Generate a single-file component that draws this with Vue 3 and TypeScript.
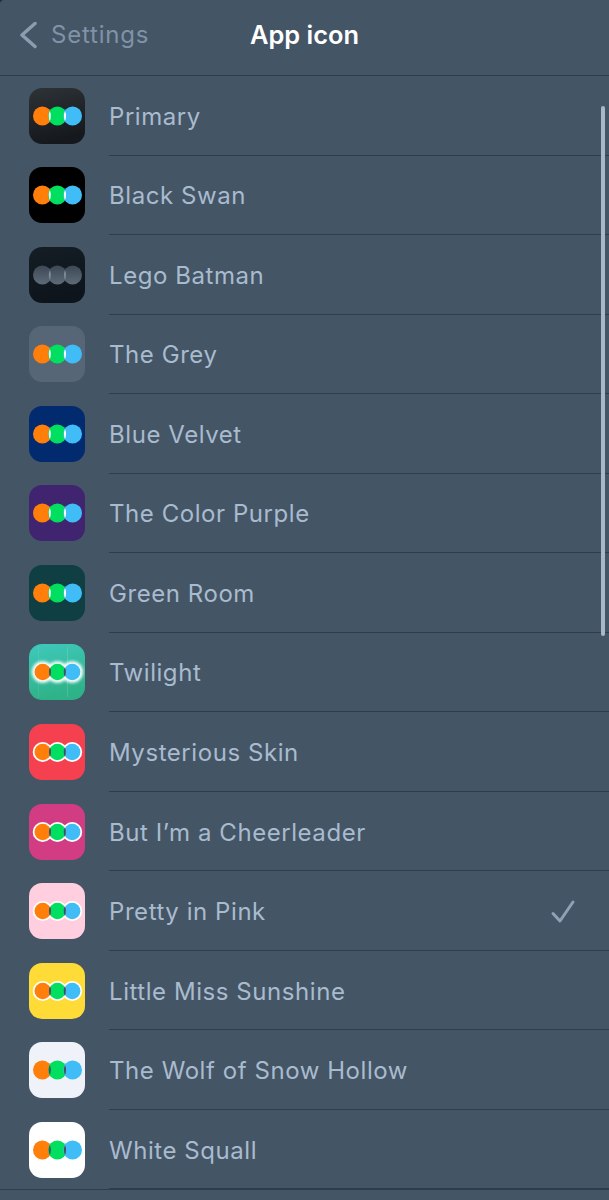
<template>
  <div class="screen">
    <header class="topbar">
      <div class="back">
        <svg class="chevron" width="20" height="30" viewBox="0 0 20 30" fill="none">
          <path d="M18 3.5 5 15l13 11.5" stroke="#8b9eb1" stroke-width="3.4" stroke-linecap="round" stroke-linejoin="round" />
        </svg>
        <span class="back-text">Settings</span>
      </div>
      <h1 class="title">App icon</h1>
    </header>

    <ul class="list">
      <li v-for="(item, i) in icons" :key="item.name" class="row">
        <svg class="icon" width="56" height="56" viewBox="0 0 56 56">
          <defs>
            <linearGradient v-if="item.gradient" :id="'bg' + i" x1="0" y1="0" x2="0.25" y2="1">
              <stop offset="0" :stop-color="item.gradient[0]" />
              <stop offset="1" :stop-color="item.gradient[1]" />
            </linearGradient>
            <linearGradient v-if="item.muted" id="dot" x1="0" y1="0" x2="0" y2="1">
              <stop offset="0" stop-color="#3d4855" />
              <stop offset="1" stop-color="#5d6a77" />
            </linearGradient>
            <filter v-if="item.glow" id="soft" x="-20%" y="-60%" width="140%" height="220%">
              <feGaussianBlur stdDeviation="1.7" />
            </filter>
          </defs>
          <rect width="56" height="56" rx="13" :fill="item.gradient ? `url(#bg${i})` : item.bg" />
          <template v-if="item.glow">
            <rect x="38" y="3" width="1" height="50" fill="#fff" opacity=".14" />
            <rect x="9" y="2" width="1" height="52" fill="#fff" opacity=".08" />
            <g filter="url(#soft)">
              <circle v-for="x in ringCenters" :key="x" :cx="x" cy="28" r="10.8" fill="#fff" />
            </g>
          </template>
          <template v-if="item.ring">
            <circle v-for="x in ringCenters" :key="x" :cx="x" cy="28" r="10" fill="#fff" />
          </template>
          <template v-if="item.muted">
            <circle v-for="x in centers" :key="x" :cx="x" cy="28" r="9.4" fill="url(#dot)" />
            <path v-for="x in lensAt" :key="x" :d="lens(x)" fill="#7d8995" />
          </template>
          <template v-else-if="item.ring || item.glow">
            <circle :cx="ringCenters[0]" cy="28" r="8.2" fill="#ff7f0a" />
            <circle :cx="ringCenters[1]" cy="28" r="8.2" fill="#00df5f" />
            <circle :cx="ringCenters[2]" cy="28" r="8.2" fill="#40bcf6" />
            <path v-for="x in ringLensAt" :key="x" :d="lens(x)" :fill="item.lens" />
          </template>
          <template v-else>
            <circle :cx="centers[0]" cy="28" r="9.4" fill="#ff7f0a" />
            <circle :cx="centers[1]" cy="28" r="9.4" fill="#00df5f" />
            <circle :cx="centers[2]" cy="28" r="9.4" fill="#40bcf6" />
            <path v-for="x in lensAt" :key="x" :d="lens(x)" :fill="item.lens" />
          </template>
        </svg>
        <div class="label">
          <span>{{ item.name }}</span>
          <svg v-if="item.name === selected" class="check" width="26" height="26" viewBox="0 0 26 26" fill="none">
            <path d="M3 14.5 10 22 23 3" stroke="#8fa2b5" stroke-width="3" stroke-linecap="round" stroke-linejoin="round" />
          </svg>
        </div>
      </li>
    </ul>

    <div class="scrollbar" />
  </div>
</template>

<script setup lang="ts">
interface AppIcon {
  name: string;
  bg?: string;
  gradient?: [string, string];
  lens: string;
  ring?: boolean;
  glow?: boolean;
  muted?: boolean;
}

const selected = 'Pretty in Pink';
const centers = [13.4, 28.4, 43.6];
const lensAt = [20.8, 36];
const ringCenters = [13.7, 28.4, 43.2];
const ringLensAt = [21, 35.8];

// sliver where two neighbouring dots overlap
function lens(x: number) {
  return `M${x} 23A13 13 0 0 1 ${x} 33A13 13 0 0 1 ${x} 23Z`;
}

const icons: AppIcon[] = [
  { name: 'Primary', gradient: ['#2e3338', '#15181d'], lens: '#fff' },
  { name: 'Black Swan', bg: '#000', lens: '#fff' },
  { name: 'Lego Batman', gradient: ['#151d25', '#0d141b'], lens: '#fff', muted: true },
  { name: 'The Grey', bg: '#566676', lens: '#fff' },
  { name: 'Blue Velvet', bg: '#012a6f', lens: '#fff' },
  { name: 'The Color Purple', bg: '#41246f', lens: '#fff' },
  { name: 'Green Room', bg: '#0f3f42', lens: '#fff' },
  { name: 'Twilight', gradient: ['#3fc9bd', '#2eb287'], lens: '#44525e', glow: true },
  { name: 'Mysterious Skin', bg: '#f5414f', lens: '#44525e', ring: true },
  { name: 'But I’m a Cheerleader', bg: '#d23c82', lens: '#44525e', ring: true },
  { name: 'Pretty in Pink', bg: '#ffcfe0', lens: '#44525e', ring: true },
  { name: 'Little Miss Sunshine', bg: '#ffdb38', lens: '#44525e', ring: true },
  { name: 'The Wolf of Snow Hollow', bg: '#eff3f9', lens: '#44525e' },
  { name: 'White Squall', bg: '#fff', lens: '#44525e' }
];
</script>

<style>
html, body { background: #1f2a33; }
</style>

<style scoped>
.screen {
  position: relative;
  width: 609px;
  height: 1200px;
  overflow: hidden;
  background: #445566;
  border-top-left-radius: 4px;
  font-family: Inter, "Liberation Sans", sans-serif;
}
.topbar {
  display: flex;
  align-items: center;
  justify-content: center;
  position: relative;
  height: 76px;
  box-sizing: border-box;
  padding-bottom: 6px;
  border-bottom: 1px solid #2e3e4e;
}
.back {
  position: absolute;
  left: 17px;
  top: 20px;
  display: flex;
  align-items: center;
  gap: 14px;
  font-size: 24px;
  letter-spacing: 0.8px;
  color: #8093a6;
}
.back-text { margin-top: -2px; }
.chevron { display: block; }
.title {
  margin: 0;
  font-size: 25.4px;
  font-weight: 600;
  color: #fff;
}
.list {
  margin: 0;
  padding: 0;
  list-style: none;
}
.row {
  display: flex;
  align-items: center;
  gap: 24px;
  height: 79.54px;
  padding-left: 29px;
  box-sizing: border-box;
}
.icon {
  flex: none;
  display: block;
}
.label {
  flex: 1;
  align-self: stretch;
  display: flex;
  align-items: center;
  justify-content: space-between;
  padding: 2px 33px 0 0;
  box-sizing: border-box;
  border-bottom: 1px solid #2e3e4e;
  font-size: 24px;
  letter-spacing: 0.56px;
  color: #a9bbce;
}
.row:last-child {
  box-shadow: 0 1px 0 #2e3e4e;
}
.check { display: block; }
.scrollbar {
  position: absolute;
  top: 106px;
  right: 4px;
  width: 4px;
  height: 530px;
  border-radius: 2px;
  background: #a9b7c6;
}
</style>
